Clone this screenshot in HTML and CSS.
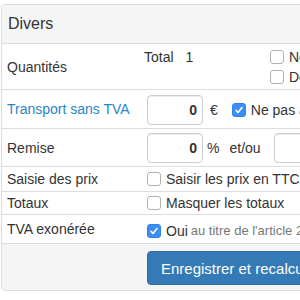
FILE: index.html
```html
<!DOCTYPE html>
<html lang="fr">
  <head>
    <meta charset="UTF-8" />
    <title>Divers</title>
    <link rel="stylesheet" href="styles.css">
  </head>
  <body>
    <div class="panel">
      <div class="panel-heading">Divers</div>

      <div class="panel-body">
        <div class="row row-qty">
          <div class="label">Quantités</div>
          <div class="value">
            <div class="totals">
              <span>Total</span>
              <span class="total-num">1</span>
            </div>
            <div class="checks">
              <label class="check"><span class="cb"></span>Ne pas afficher</label>
              <label class="check"><span class="cb"></span>Détailler</label>
            </div>
          </div>
        </div>

        <div class="row row-input">
          <div class="label"><a href="#" class="link">Transport sans TVA</a></div>
          <div class="value">
            <input type="text" class="num" value="0">
            <span class="unit">€</span>
            <label class="check"><span class="cb checked"></span>Ne pas appliquer la TVA</label>
          </div>
        </div>

        <div class="row row-input row-discount">
          <div class="label">Remise</div>
          <div class="value">
            <input type="text" class="num" value="0">
            <span class="unit unit-pct">%</span>
            <span class="or">et/ou</span>
            <input type="text" class="num" value="">
          </div>
        </div>

        <div class="row row-check">
          <div class="label">Saisie des prix</div>
          <div class="value">
            <label class="check"><span class="cb"></span>Saisir les prix en TTC</label>
          </div>
        </div>

        <div class="row row-check row-short">
          <div class="label">Totaux</div>
          <div class="value">
            <label class="check"><span class="cb"></span>Masquer les totaux</label>
          </div>
        </div>

        <div class="row row-check row-last">
          <div class="label">TVA exonérée</div>
          <div class="value">
            <label class="check"><span class="cb checked"></span>Oui <small class="note">au titre de l'article 262 ter du CGI</small></label>
          </div>
        </div>
      </div>

      <div class="panel-footer">
        <button type="button" class="btn-primary">Enregistrer et recalculer</button>
      </div>
    </div>
  </body>
</html>
```

FILE: styles.css
```css
body {
  font-family: "Liberation Sans", Arial, sans-serif;
  font-size: 14px;
  color: #333;
  margin: 0;
  padding: 4px 0 0 1px;
  overflow: hidden;
  background-color: #fff;
}
.panel {
  width: 640px;
  border: 1px solid #ddd;
  border-radius: 4px;
  background-color: #fff;
}
.panel-heading {
  background-color: #f5f5f5;
  border-bottom: 1px solid #ddd;
  font-size: 16px;
  line-height: 38px;
  padding: 0 6px;
  border-radius: 3px 3px 0 0;
}
.row {
  display: grid;
  grid-template-columns: 139px 1fr;
  align-items: center;
  border-top: 1px solid #ddd;
}
.row-qty {
  border-top: none;
}
.label {
  padding: 0 5px;
}
.link {
  color: #2487ca;
  text-decoration: none;
}
.value {
  display: flex;
  align-items: center;
  padding-left: 6px;
  white-space: nowrap;
}
.row-qty .value {
  align-items: flex-start;
  padding: 3px 0 2px 3px;
  line-height: 20px;
}
.totals {
  width: 126px;
}
.total-num {
  margin-left: 8px;
}
.checks {
  display: flex;
  flex-direction: column;
}
.row-input .value {
  padding-top: 5px;
  padding-bottom: 3px;
}
.row-discount .value {
  padding-top: 4px;
}
.row-check .value {
  height: 24px;
}
.row-short .value {
  height: 22px;
}
.row-last .value {
  height: 28px;
  padding-top: 3px;
  box-sizing: border-box;
}
.num {
  width: 56px;
  height: 30px;
  box-sizing: border-box;
  border: 1px solid #ccc;
  border-radius: 4px;
  box-shadow: inset 0 1px 1px rgba(0, 0, 0, 0.075);
  font-family: inherit;
  font-size: 14px;
  font-weight: bold;
  color: #333;
  text-align: right;
  padding: 0 5px;
}
.unit {
  margin: 0 14px 0 7px;
}
.unit-pct {
  margin: 0 10px 0 4px;
}
.or {
  margin-right: 13px;
}
.check {
  display: flex;
  align-items: center;
  height: 20px;
}
.cb {
  display: inline-block;
  width: 12px;
  height: 12px;
  border: 1px solid #b3b3b3;
  border-radius: 3px;
  background-color: #fff;
  margin-right: 5px;
  flex-shrink: 0;
}
.cb.checked {
  background-color: #3a8ef5;
  border-color: #3282e6;
  background-image: url("data:image/svg+xml,%3Csvg xmlns='http://www.w3.org/2000/svg' viewBox='0 0 12 12'%3E%3Cpath d='M3 6.3l2 2.2 4-5' fill='none' stroke='%23fff' stroke-width='1.6' stroke-linecap='round' stroke-linejoin='round'/%3E%3C/svg%3E");
}
.note {
  color: #777;
  font-size: 13px;
  margin-left: 3px;
}
.panel-footer {
  background-color: #f5f5f5;
  border-top: 1px solid #ddd;
  padding: 7px 0 5px 145px;
  border-radius: 0 0 3px 3px;
}
.btn-primary {
  background-color: #337ab7;
  border: 1px solid #2e6da4;
  color: #fff;
  height: 34px;
  padding: 0 13px;
  border-radius: 4px;
  font-family: inherit;
  font-size: 15px;
  white-space: nowrap;
  cursor: pointer;
}
```
